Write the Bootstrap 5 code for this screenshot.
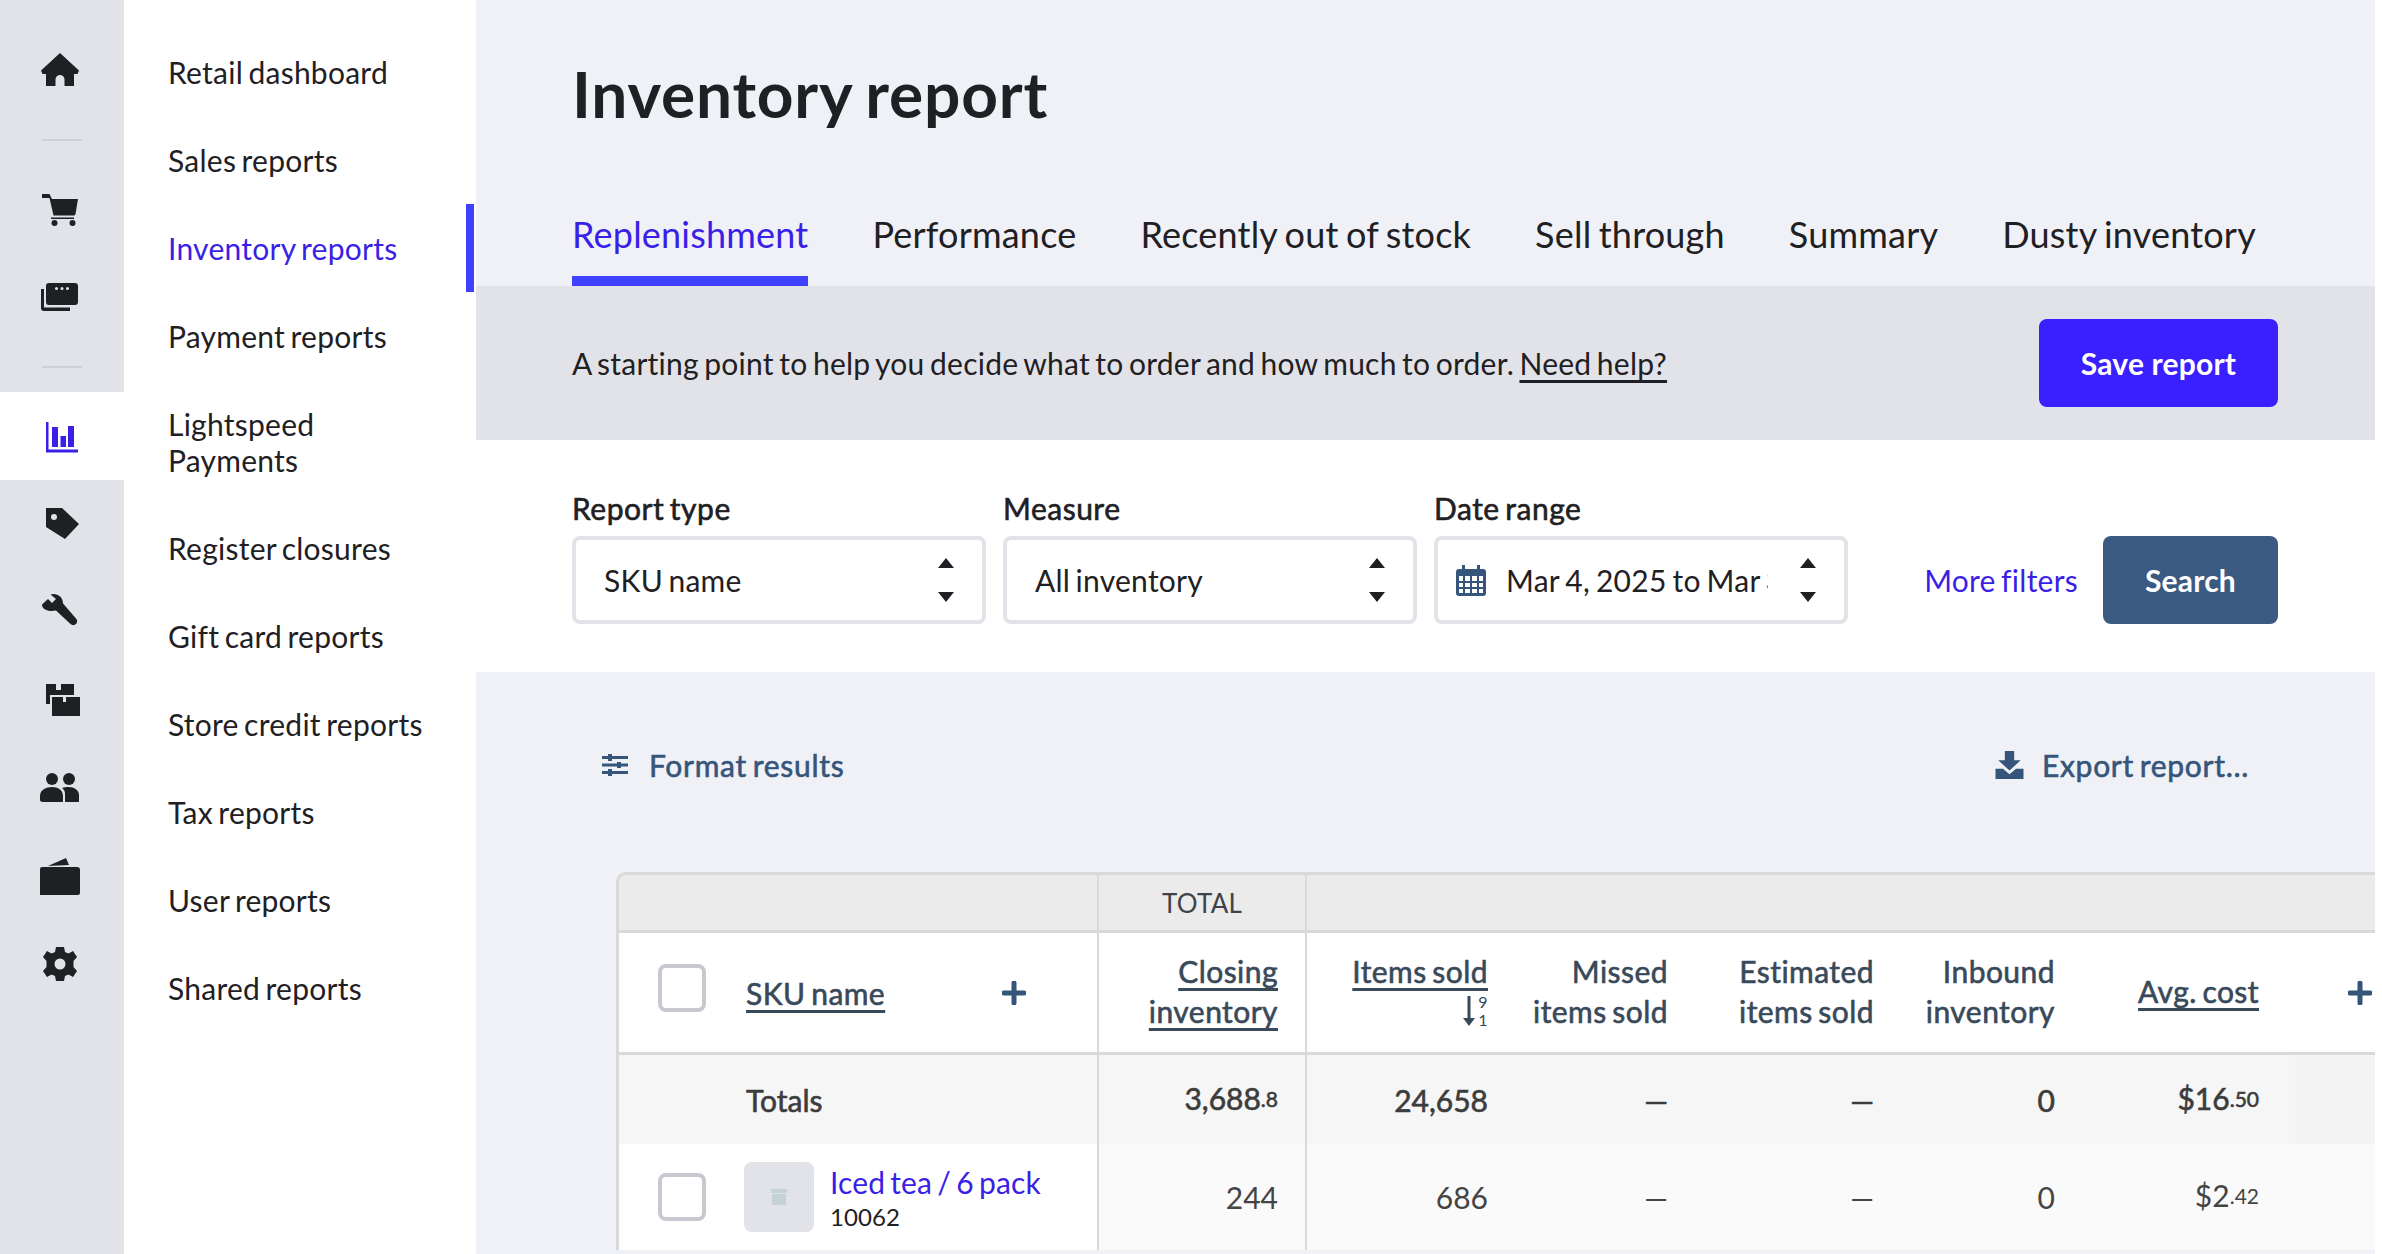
<!DOCTYPE html>
<html lang="en">
<head>
<meta charset="utf-8">
<title>Inventory report</title>
<link href="https://cdn.jsdelivr.net/npm/bootstrap@5.3.0/dist/css/bootstrap.min.css" rel="stylesheet">
<style>
html,body{height:100%;overflow:hidden}
body{font-family:"Lato","Liberation Sans",sans-serif;background:#fff;color:#1f2023;font-size:30px;line-height:36px;width:2382px;height:1254px;letter-spacing:.25px;word-spacing:-2.5px}
.med{-webkit-text-stroke:.6px currentColor}
.shell{height:1254px;padding-right:7px}
.rail{width:124px;background:#e2e3e8;padding-top:26px;flex:none}
.rail-item{height:88px;display:flex;align-items:center;justify-content:center;color:#1f2023}
.rail-item svg{width:48px;height:48px;fill:currentColor;margin-left:-4px;display:block}
.rail-item.on{background:#fff;color:#3a1fe6}
.rail-sep{display:flex;align-items:center;justify-content:center}
.rail-sep::before{content:"";width:40px;height:2px;background:#cfd0d6}
.sep-a{height:52px}.sep-b{height:50px}
.subnav{width:350px;background:#fff;padding-top:28px;flex:none}
.sub-link{display:block;padding:26px 30px 26px 44px;color:#1f2023;text-decoration:none;font-size:30px;line-height:36px;position:relative}
.sub-link.on{color:#3a1fe6}
.sub-link.on::after{content:"";position:absolute;right:0;top:0;bottom:0;width:8px;background:#4040ff}
.mainp{flex:1;min-width:0;margin-left:2px;background:#f0f1f7;overflow:hidden}
.headp{height:286px;padding-left:96px}
.ttl{font-size:64px;font-weight:700;line-height:76px;margin:0;padding-top:56px;height:172px;letter-spacing:.8px;word-spacing:-3px}
.tabbar{gap:64px}
.tabi{font-size:36px;line-height:44px;color:#1f2023;text-decoration:none;height:114px;padding-top:40px;border-bottom:10px solid transparent;display:block;letter-spacing:.2px;word-spacing:-2px}
.tabi.on{color:#3a1fe6;border-bottom-color:#4040ff}
.band{height:154px;background:#e2e3e8;padding:0 97px 0 96px}
.band-link{color:#1f2023;text-decoration-thickness:3px;text-underline-offset:5px}
.btn-save,.btn-find{height:88px;font-size:30px;font-weight:700;color:#fff;border:0;border-radius:8px;padding:0;letter-spacing:.2px}
.btn-save{width:239px;background:#3a1fff}
.btn-find{width:175px;background:#3a5a82}
.btn-save:hover{background:#3a1fff;color:#fff}.btn-find:hover{background:#3a5a82;color:#fff}
.filters{height:232px;background:#fff;padding:0 97px 0 96px;gap:17px}
.fld{width:414px}
.fld-lbl{font-size:30px;line-height:36px;margin:0 0 10px;display:block;letter-spacing:.5px}
.pick{height:88px;border:4px solid #e2e3e8;border-radius:8px;padding:0 28px 0 28px;display:flex;align-items:center;justify-content:space-between;font-size:30px;line-height:36px;color:#1f2023}
.pick-date{padding-left:18px}
.updn{width:16px;height:44px;flex:none;display:block;fill:#1f2023}
.clipv{width:262px;overflow:hidden;white-space:nowrap;margin-left:20px;flex:none;word-spacing:-2px}
.cal{width:30px;height:32px;flex:none;display:block}
.mf{color:#3a1fe6;text-decoration:none;margin-right:25px;margin-left:auto}
.acts{height:200px;padding:0 126px 14px 126px;color:#35557a;font-size:30px;letter-spacing:.7px}
.acts svg{display:block;fill:#35557a}
.gapf{gap:21px}
.gape{gap:18px}
.tbox{margin-left:140px}
.rpt{table-layout:fixed;border-collapse:separate;border-spacing:0;width:1759px;margin:0;color:#38495a;font-size:30px;line-height:40px}
.rpt td,.rpt th{padding:0 28px 0 0;text-align:right;vertical-align:middle;border:0;box-shadow:none;background:transparent;font-weight:400}
.r1 th{height:61px;background:#ebebeb;border-top:3px solid #d9d9d9!important;border-bottom:3px solid #d9d9d9!important;font-size:26px;color:#3f4347;text-align:center;padding:0}
.r2 th{height:122px;background:#fff;border-bottom:3px solid #d9d9d9!important;color:#38495a;padding-bottom:3px;letter-spacing:.45px}
.r3 td{height:89px;background:#f6f6f6;color:#3c3c3c;letter-spacing:0}
.r4 td{height:106px;background:#fafafa;color:#444;letter-spacing:0}
.rpt .c1{border-left:3px solid #d9d9d9!important;text-align:left;padding:0 0 0 39px}
.rpt .c2{border-left:2px solid #d9d9d9!important;border-right:2px solid #d9d9d9!important;padding-right:27px}
.rpt .c3{padding-right:31px}
.rpt .c7{padding-right:30px}
.r1 .c1{border-top-left-radius:10px}
.rpt .plain{background:#fff}
.rpt .endc{background:#f4f4f4}
.r4 .endc{background:#fafafa}
.rpt .lk{color:#38495a;text-decoration:underline;text-decoration-thickness:3px;text-underline-offset:5px}
.cbx{width:48px;height:48px;border:4px solid #c8c9d0;border-radius:8px;background:#fff;flex:none;display:block}
.cbx-up{margin-top:-9px}
.plusm{width:24px;height:24px;fill:#35557a;display:block;flex:none}
.plus-a{margin-right:71px}
.plus-b{margin-left:59px}
.sku-h{margin-left:40px}
.tot-l{margin-left:88px;display:block}
.thumbb{width:70px;height:70px;border-radius:8px;background:#e2e3e8;display:flex;align-items:center;justify-content:center;flex:none;margin-left:38px}
.thumbb svg{width:18px;height:18px;fill:#c3d2d5;display:block}
.frac{font-size:21px;position:relative;top:-3px;letter-spacing:0}
.itxt{padding-top:3px;letter-spacing:.1px}
.iname{color:#3a1fe6;text-decoration:none;font-size:30px;line-height:36px;display:block}
.isku{font-size:24px;line-height:34px;color:#1f2023;display:block}
.sorti{display:inline-flex;align-items:center;gap:3px;height:40px;vertical-align:top}
.sorti svg{width:12px;height:30px;fill:#38495a;display:block}
.digits{font-size:16px;line-height:18px;font-weight:400;display:block;text-align:left;-webkit-text-stroke:0}
</style>
</head>
<body>
<div class="shell d-flex">
  <nav class="rail">
    <div class="rail-item"><svg viewBox="0 -2 48 48"><path d="M24 5 43 22.500 41.500 26H38V38H28.500V31.500A4.500 4.500 0 0 0 19.500 31.500V38H10V26H6.500L5 22.500Z"/></svg></div>
    <div class="rail-sep sep-a"></div>
    <div class="rail-item"><svg viewBox="0 0 48 48"><path d="M6 8H13.500L16 13H42L39.500 28A2 2 0 0 1 37.500 29.500H17.500L13.500 12H6Z"/><path d="M15 31.500H38V33H15Z"/><circle cx="18.500" cy="37" r="3"/><circle cx="36.500" cy="37" r="3"/></svg></div>
    <div class="rail-item"><svg viewBox="0 0 48 48"><path fill-rule="evenodd" d="M13 9H39A3 3 0 0 1 42 12V28A3 3 0 0 1 39 31H13A3 3 0 0 1 10 28V12A3 3 0 0 1 13 9ZM20.500 13A1.500 1.500 0 1 0 20.500 16 1.500 1.500 0 0 0 20.500 13ZM26 13A1.500 1.500 0 1 0 26 16 1.500 1.500 0 0 0 26 13ZM31.500 13A1.500 1.500 0 1 0 31.500 16 1.500 1.500 0 0 0 31.500 13Z"/><path d="M5 15H8V33.500H34V37H8A3 3 0 0 1 5 34Z"/></svg></div>
    <div class="rail-sep sep-b"></div>
    <div class="rail-item on"><svg viewBox="0 -2 48 48"><path d="M10 8H12.500V35.500H42V38.500H10Z"/><path d="M16 13H22V33H16ZM24.500 22H30V33H24.500ZM32 12H38V33H32Z"/></svg></div>
    <div class="rail-item"><svg viewBox="0 0 48 48"><path fill-rule="evenodd" d="M10 8H26L43 24 29 39 10 27ZM18 14A3 3 0 1 0 18 20 3 3 0 0 0 18 14Z"/></svg></div>
    <div class="rail-item"><svg viewBox="0 0 48 48"><path d="M6 16.500 12 11 16 15 20 11 14.500 6.500C20 4.500 27 8 27 15.500L40 30.500C41.500 32 41.500 34.500 40 36 38.500 37.500 36 37.500 34.500 36L20 22.500C13 24 6 22 6 16.500Z"/></svg></div>
    <div class="rail-item"><svg viewBox="0 0 48 48"><path d="M10 8H20V14H25V8H38V19H14V28H10Z"/><path d="M16 21H27V26H30V21H44V40H16Z"/></svg></div>
    <div class="rail-item"><svg viewBox="0 0 48 48"><circle cx="16" cy="15" r="6"/><circle cx="33" cy="15" r="6"/><path d="M4 38V32C4 26 10 23 16 23S27 26 27 32V38H8Q4 38 4 36Z"/><path d="M29 38V30C29 27 28 25.500 26 24 28 23 30.500 23 33 23 38 23 43 26 43 31V38Z"/></svg></div>
    <div class="rail-item"><svg viewBox="0 0 48 48"><path d="M12 14 30 6 33 13Z"/><path d="M6 15H41A3 3 0 0 1 44 18V41A2 2 0 0 1 42 43H4V17A2 2 0 0 1 6 15Z"/></svg></div>
    <div class="rail-item"><svg viewBox="0 0 48 48"><path fill-rule="evenodd" d="M20 7H28L29 12 32.500 13.500 37 11 41 17 37.500 21V27L41 31 37 37 32.500 34.500 29 36 28 41H20L19 36 15.500 34.500 11 37 7 31 10.500 27V21L7 17 11 11 15.500 13.500 19 12ZM24 18.500A5.500 5.500 0 1 0 24 29.500 5.500 5.500 0 0 0 24 18.500Z"/></svg></div>
  </nav>
  <nav class="subnav">
    <a class="sub-link" href="#">Retail dashboard</a>
    <a class="sub-link" href="#">Sales reports</a>
    <a class="sub-link on" href="#">Inventory reports</a>
    <a class="sub-link" href="#">Payment reports</a>
    <a class="sub-link" href="#">Lightspeed Payments</a>
    <a class="sub-link" href="#">Register closures</a>
    <a class="sub-link" href="#">Gift card reports</a>
    <a class="sub-link" href="#">Store credit reports</a>
    <a class="sub-link" href="#">Tax reports</a>
    <a class="sub-link" href="#">User reports</a>
    <a class="sub-link" href="#">Shared reports</a>
  </nav>
  <main class="mainp">
    <header class="headp">
      <h1 class="ttl">Inventory report</h1>
      <div class="d-flex tabbar">
        <a class="tabi on" href="#">Replenishment</a>
        <a class="tabi" href="#">Performance</a>
        <a class="tabi" href="#">Recently out of stock</a>
        <a class="tabi" href="#">Sell through</a>
        <a class="tabi" href="#">Summary</a>
        <a class="tabi" href="#">Dusty inventory</a>
      </div>
    </header>
    <section class="band d-flex align-items-center justify-content-between">
      <div>A starting point to help you decide what to order and how much to order. <a class="band-link" href="#">Need help?</a></div>
      <button class="btn btn-save" type="button">Save report</button>
    </section>
    <section class="filters d-flex align-items-end pb-5">
      <div class="fld">
        <label class="fld-lbl med">Report type</label>
        <div class="pick"><span>SKU name</span><svg class="updn" viewBox="0 0 16 44"><path d="M8 0 16 10H0ZM8 44 0 34H16Z"/></svg></div>
      </div>
      <div class="fld">
        <label class="fld-lbl med">Measure</label>
        <div class="pick"><span>All inventory</span><svg class="updn" viewBox="0 0 16 44"><path d="M8 0 16 10H0ZM8 44 0 34H16Z"/></svg></div>
      </div>
      <div class="fld">
        <label class="fld-lbl med">Date range</label>
        <div class="pick pick-date"><svg class="cal" viewBox="0 0 30 32"><path fill="#35557a" fill-rule="evenodd" d="M3 5H6V1H9V5H21V1H24V5H27A3 3 0 0 1 30 8V29A3 3 0 0 1 27 32H3A3 3 0 0 1 0 29V8A3 3 0 0 1 3 5ZM3 12V29H27V12Z"/><path fill="#35557a" d="M7 12H9V29H7ZM14 12H16V29H14ZM21 12H23V29H21ZM3 17H27V19H3ZM3 23H27V25H3Z"/></svg><span class="clipv">Mar 4, 2025 to Mar 31, 2025</span><svg class="updn ms-auto" viewBox="0 0 16 44"><path d="M8 0 16 10H0ZM8 44 0 34H16Z"/></svg></div>
      </div>
      <div class="d-flex align-items-center flex-grow-1">
        <a class="mf" href="#">More filters</a>
        <button class="btn btn-find" type="button">Search</button>
      </div>
    </section>
    <section class="acts d-flex align-items-center justify-content-between med">
      <div class="d-flex align-items-center gapf"><svg width="26" height="24" viewBox="0 0 26 24"><path d="M0 3H6V1H10V3H26V6H10V8H6V6H0ZM0 10.500H15V9H19V10.500H26V13.500H19V15H15V13.500H0ZM0 18H6V16H10V18H26V21H10V23H6V21H0Z"/></svg><span>Format results</span></div>
      <div class="d-flex align-items-center gape"><svg width="29" height="28" viewBox="0 0 30 30"><path d="M10 0H20V10H27L15 21 3 10H10Z"/><path d="M0 19H8L15 25 22 19H30V30H0Z"/></svg><span>Export report...</span></div>
    </section>
    <div class="tbox">
      <table class="table rpt">
        <colgroup><col style="width:481px"><col style="width:210px"><col style="width:212px"><col style="width:177px"><col style="width:206px"><col style="width:181px"><col style="width:206px"><col style="width:86px"></colgroup>
        <tr class="r1"><th class="c1"></th><th class="c2 p-0">TOTAL</th><th colspan="6"></th></tr>
        <tr class="r2">
          <th class="c1"><div class="d-flex align-items-center"><span class="cbx cbx-up"></span><a class="lk sku-h med" href="#">SKU name</a><svg class="plusm ms-auto plus-a" viewBox="0 0 24 24"><path d="M9.500 2A2.500 2.500 0 0 1 14.500 2V9.500H22A2.500 2.500 0 0 1 22 14.500H14.500V22A2.500 2.500 0 0 1 9.500 22V14.500H2A2.500 2.500 0 0 1 2 9.500H9.500Z"/></svg></div></th>
          <th class="c2 med"><a class="lk" href="#">Closing inventory</a></th>
          <th class="c3 med"><a class="lk" href="#">Items sold</a><br><span class="sorti"><svg viewBox="0 0 12 30"><path d="M4.500 0H7.500V22H12L6 30 0 22H4.500Z"/></svg><span><span class="digits">9</span><span class="digits">1</span></span></span></th>
          <th class="med">Missed items sold</th>
          <th class="med">Estimated items sold</th>
          <th class="med">Inbound inventory</th>
          <th class="med c7"><a class="lk" href="#">Avg. cost</a></th>
          <th class="plain p-0"><svg class="plusm plus-b" viewBox="0 0 24 24"><path d="M9.500 2A2.500 2.500 0 0 1 14.500 2V9.500H22A2.500 2.500 0 0 1 22 14.500H14.500V22A2.500 2.500 0 0 1 9.500 22V14.500H2A2.500 2.500 0 0 1 2 9.500H9.500Z"/></svg></th>
        </tr>
        <tr class="r3">
          <td class="c1 med"><span class="tot-l">Totals</span></td>
          <td class="c2 med">3,688<span class="frac">.8</span></td>
          <td class="c3 med">24,658</td><td class="med">—</td><td class="med">—</td><td class="med">0</td>
          <td class="med c7">$16<span class="frac">.50</span></td><td class="endc"></td>
        </tr>
        <tr class="r4">
          <td class="c1 plain"><div class="d-flex align-items-center"><span class="cbx"></span><span class="thumbb"><svg viewBox="0 0 18 18"><path d="M1 1H17V5H1ZM2 6H16V17H2Z"/></svg></span><span class="ms-3 itxt"><a class="iname" href="#">Iced tea / 6 pack</a><span class="isku">10062</span></span></div></td>
          <td class="c2">244</td>
          <td class="c3">686</td><td>—</td><td>—</td><td>0</td>
          <td class="c7">$2<span class="frac">.42</span></td><td class="endc"></td>
        </tr>
      </table>
    </div>
  </main>
</div>
<script src="https://cdn.jsdelivr.net/npm/bootstrap@5.3.0/dist/js/bootstrap.bundle.min.js"></script>
</body>
</html>
